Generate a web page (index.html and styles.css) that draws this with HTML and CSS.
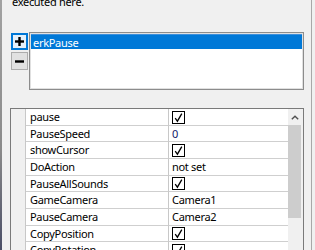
FILE: index.html
```html
<!DOCTYPE html>
<html>
<head>
<meta charset="utf-8">
<link rel="stylesheet" href="styles.css">
</head>
<body>
<div class="window">
  <div class="edge-left"></div>
  <div class="main">
    <div class="desc">executed here.</div>
    <div class="listrow">
      <div class="btns">
        <button class="btn btn-focus" aria-label="add">
          <svg width="9" height="9" viewBox="0 0 9 9"><rect x="3.3" y="0" width="2.4" height="9" fill="#000"/><rect x="0" y="3.3" width="9" height="2.4" fill="#000"/></svg>
        </button>
        <button class="btn" aria-label="remove">
          <svg width="9" height="9" viewBox="0 0 9 9"><rect x="0" y="3.3" width="9" height="2.4" fill="#000"/></svg>
        </button>
      </div>
      <div class="listbox">
        <div class="item selected">erkPause</div>
      </div>
    </div>
    <div class="grid">
      <div class="rows">
        <div class="row"><div class="mg"></div><div class="name">pause</div><div class="val"><span class="cb"><svg width="13" height="13" viewBox="0 0 13 13"><rect x="0.5" y="0.5" width="12" height="12" fill="#fff" stroke="#000"/><path d="M3.2 7.2 L5.4 10.2 L9.8 2.6" fill="none" stroke="#000" stroke-width="1.3"/></svg></span></div></div>
        <div class="row"><div class="mg"></div><div class="name">PauseSpeed</div><div class="val num">0</div></div>
        <div class="row"><div class="mg"></div><div class="name">showCursor</div><div class="val"><span class="cb"><svg width="13" height="13" viewBox="0 0 13 13"><rect x="0.5" y="0.5" width="12" height="12" fill="#fff" stroke="#000"/><path d="M3.2 7.2 L5.4 10.2 L9.8 2.6" fill="none" stroke="#000" stroke-width="1.3"/></svg></span></div></div>
        <div class="row"><div class="mg"></div><div class="name">DoAction</div><div class="val">not set</div></div>
        <div class="row"><div class="mg"></div><div class="name">PauseAllSounds</div><div class="val"><span class="cb"><svg width="13" height="13" viewBox="0 0 13 13"><rect x="0.5" y="0.5" width="12" height="12" fill="#fff" stroke="#000"/><path d="M3.2 7.2 L5.4 10.2 L9.8 2.6" fill="none" stroke="#000" stroke-width="1.3"/></svg></span></div></div>
        <div class="row"><div class="mg"></div><div class="name">GameCamera</div><div class="val">Camera1</div></div>
        <div class="row"><div class="mg"></div><div class="name">PauseCamera</div><div class="val">Camera2</div></div>
        <div class="row"><div class="mg"></div><div class="name">CopyPosition</div><div class="val"><span class="cb"><svg width="13" height="13" viewBox="0 0 13 13"><rect x="0.5" y="0.5" width="12" height="12" fill="#fff" stroke="#000"/><path d="M3.2 7.2 L5.4 10.2 L9.8 2.6" fill="none" stroke="#000" stroke-width="1.3"/></svg></span></div></div>
        <div class="row"><div class="mg"></div><div class="name">CopyRotation</div><div class="val"><span class="cb"><svg width="13" height="13" viewBox="0 0 13 13"><rect x="0.5" y="0.5" width="12" height="12" fill="#fff" stroke="#000"/><path d="M3.2 7.2 L5.4 10.2 L9.8 2.6" fill="none" stroke="#000" stroke-width="1.3"/></svg></span></div></div>
      </div>
      <div class="scrollbar">
        <div class="arrow"><svg width="8" height="5" viewBox="0 0 8 5"><path d="M0.8 4.3 L4 1.2 L7.2 4.3" fill="none" stroke="#505050" stroke-width="1.4"/></svg></div>
        <div class="thumb"></div>
      </div>
    </div>
  </div>
  <div class="edge-right"></div>
</div>
</body>
</html>
```
FILE: styles.css
```css
html, body {
  margin: 0;
  padding: 0;
  background: #f0f0f0;
  overflow: hidden;
}
body {
  font-family: "Noto Sans", "DejaVu Sans", sans-serif;
  font-size: 11px;
  letter-spacing: -0.3px;
  color: #000;
}
.window {
  display: flex;
  width: 315px;
  height: 250px;
  overflow: hidden;
}
.edge-left {
  width: 2px;
  flex: none;
  background: linear-gradient(#a2a2a2, #8a8a8a 60%, #4a4e66);
}
.main {
  flex: none;
  width: 309px;
  box-sizing: border-box;
  padding: 0 7px 0 8px;
}
.edge-right {
  flex: none;
  width: 1px;
  background: #a8a8a8;
}
.desc {
  margin-top: -5px;
  height: 14px;
  line-height: 14px;
  padding-left: 2px;
  white-space: nowrap;
}
.listrow {
  display: flex;
  gap: 1px;
  margin-top: 23px;
  padding-left: 1px;
}
.btns {
  display: flex;
  flex-direction: column;
  gap: 2px;
  margin-top: 1px;
}
.btn {
  box-sizing: border-box;
  width: 17px;
  height: 17px;
  padding: 0;
  margin: 0;
  border: 1px solid #adadad;
  background: #e1e1e1;
  display: flex;
  align-items: center;
  justify-content: center;
}
.btn + .btn {
  height: 18px;
}
.btn-focus {
  border: 1px solid #0078d7;
  box-shadow: inset 0 0 0 1px #0078d7;
  background: #e5f1fb;
}
.listbox {
  box-sizing: border-box;
  width: 275px;
  height: 58px;
  border: 1px solid #8c8c8c;
  box-shadow: inset 0 0 0 1px #e0e0e0;
  background: #fff;
  padding: 1px 1px;
}
.item {
  height: 15px;
  line-height: 15px;
  padding-left: 2px;
  white-space: nowrap;
}
.selected {
  background: #0078d7;
  color: #fff;
  border-top: 1px solid #3c8fdc;
  box-sizing: border-box;
}
.grid {
  box-sizing: border-box;
  width: 294px;
  height: 160px;
  margin-top: 18px;
  border: 1px solid #7a7a7a;
  background: #fff;
  display: flex;
  overflow: hidden;
}
.rows {
  flex: 1;
  display: flex;
  flex-direction: column;
}
.row {
  display: flex;
  height: 16.67px;
  flex: none;
}
.mg {
  width: 14px;
  flex: none;
  background: #f0f0f0;
  border-right: 1px solid #c8c8c8;
}
.name, .val {
  box-sizing: border-box;
  height: 16.67px;
  line-height: 16.67px;
  border-bottom: 1px solid #cfcfcf;
  white-space: nowrap;
  overflow: hidden;
}
.name {
  width: 143px;
  flex: none;
  padding-left: 4px;
  border-right: 1px solid #c8c8c8;
}
.val {
  flex: 1;
  padding-left: 3px;
}
.num {
  color: #10206a;
}
.cb {
  display: block;
  width: 13px;
  height: 13px;
  margin-top: 1.5px;
}
.cb svg {
  display: block;
}
.scrollbar {
  width: 15px;
  flex: none;
  background: #f0f0f0;
  display: flex;
  flex-direction: column;
}
.arrow {
  height: 16px;
  display: flex;
  align-items: center;
  justify-content: center;
  padding-right: 1px;
}
.thumb {
  height: 93px;
  width: 13px;
  margin-left: 0;
  background: #cdcdcd;
}
```
